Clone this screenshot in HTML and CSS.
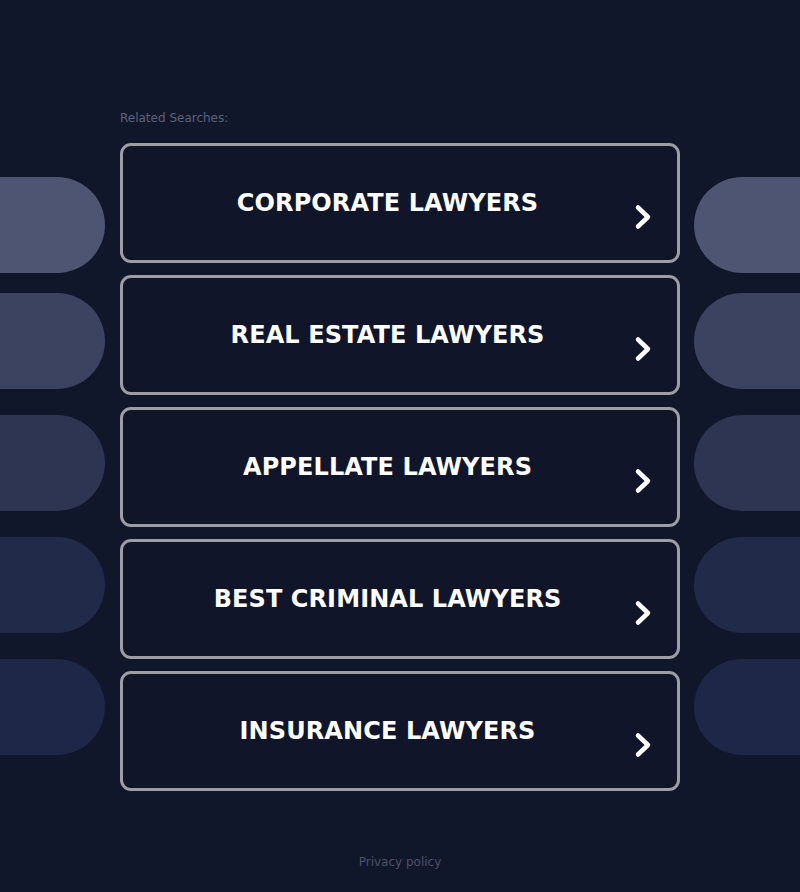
FILE: index.html
```html
<!DOCTYPE html>
<html lang="en">
<head>
<meta charset="utf-8">
<title>Related Searches</title>
<link rel="stylesheet" href="styles.css">
</head>
<body>
<div class="page">
  <div class="side side-left">
    <div class="pill pill-1"></div>
    <div class="pill pill-2"></div>
    <div class="pill pill-3"></div>
    <div class="pill pill-4"></div>
    <div class="pill pill-5"></div>
  </div>
  <main class="main">
    <div class="label">Related Searches:</div>
    <div class="list">
      <a class="item" href="#"><span class="item-text">CORPORATE LAWYERS</span><svg class="chev" viewBox="0 0 22 28"><polyline points="6,4.5 16,14 6,23.5"/></svg></a>
      <a class="item" href="#"><span class="item-text">REAL ESTATE LAWYERS</span><svg class="chev" viewBox="0 0 22 28"><polyline points="6,4.5 16,14 6,23.5"/></svg></a>
      <a class="item" href="#"><span class="item-text">APPELLATE LAWYERS</span><svg class="chev" viewBox="0 0 22 28"><polyline points="6,4.5 16,14 6,23.5"/></svg></a>
      <a class="item" href="#"><span class="item-text">BEST CRIMINAL LAWYERS</span><svg class="chev" viewBox="0 0 22 28"><polyline points="6,4.5 16,14 6,23.5"/></svg></a>
      <a class="item" href="#"><span class="item-text">INSURANCE LAWYERS</span><svg class="chev" viewBox="0 0 22 28"><polyline points="6,4.5 16,14 6,23.5"/></svg></a>
    </div>
    <div class="footer"><a class="privacy" href="#">Privacy policy</a></div>
  </main>
  <div class="side side-right">
    <div class="pill pill-1"></div>
    <div class="pill pill-2"></div>
    <div class="pill pill-3"></div>
    <div class="pill pill-4"></div>
    <div class="pill pill-5"></div>
  </div>
</div>
</body>
</html>
```

FILE: styles.css
```css
html, body {
  margin: 0;
  padding: 0;
  background: #11172b;
}
body {
  font-family: "DejaVu Sans", "Liberation Sans", sans-serif;
  width: 800px;
  height: 892px;
  overflow: hidden;
}
.page {
  display: grid;
  grid-template-columns: 120px 560px 120px;
}
.side {
  display: flex;
  flex-direction: column;
  gap: 26px;
  padding-top: 177px;
}
.pill {
  height: 96px;
}
.side-left .pill {
  width: 105px;
  border-radius: 0 48px 48px 0;
}
.side-right .pill {
  width: 106px;
  margin-left: 14px;
  border-radius: 48px 0 0 48px;
}
.pill-1 { background: #4d5572; margin-bottom: -6px; }
.pill-2 { background: #3b4361; }
.pill-3 { background: #2d3553; }
.pill-4 { background: #222a4a; }
.pill-5 { background: #1e2747; }
.main {
  padding-top: 109px;
}
.label {
  font-size: 12px;
  line-height: 18px;
  color: #5c6279;
  margin-bottom: 16px;
}
.list {
  display: flex;
  flex-direction: column;
  gap: 12px;
}
.item {
  position: relative;
  display: flex;
  align-items: center;
  height: 114px;
  border: 3px solid #9d9ea5;
  border-radius: 11px;
  background: #10152a;
  text-decoration: none;
  padding-right: 25px;
}
.item-text {
  flex: 1;
  text-align: center;
  color: #ffffff;
  font-weight: bold;
  font-size: 24px;
  letter-spacing: 0.1px;
  line-height: 30px;
  margin-top: -1px;
}
.chev {
  position: absolute;
  right: 23px;
  top: 57px;
  width: 22px;
  height: 28px;
}
.chev polyline {
  fill: none;
  stroke: #ffffff;
  stroke-width: 4.5;
  stroke-linecap: round;
  stroke-linejoin: round;
}
.footer {
  margin-top: 61px;
  text-align: center;
  line-height: 18px;
}
.privacy {
  font-size: 12px;
  color: #4b5169;
  text-decoration: none;
}
```
